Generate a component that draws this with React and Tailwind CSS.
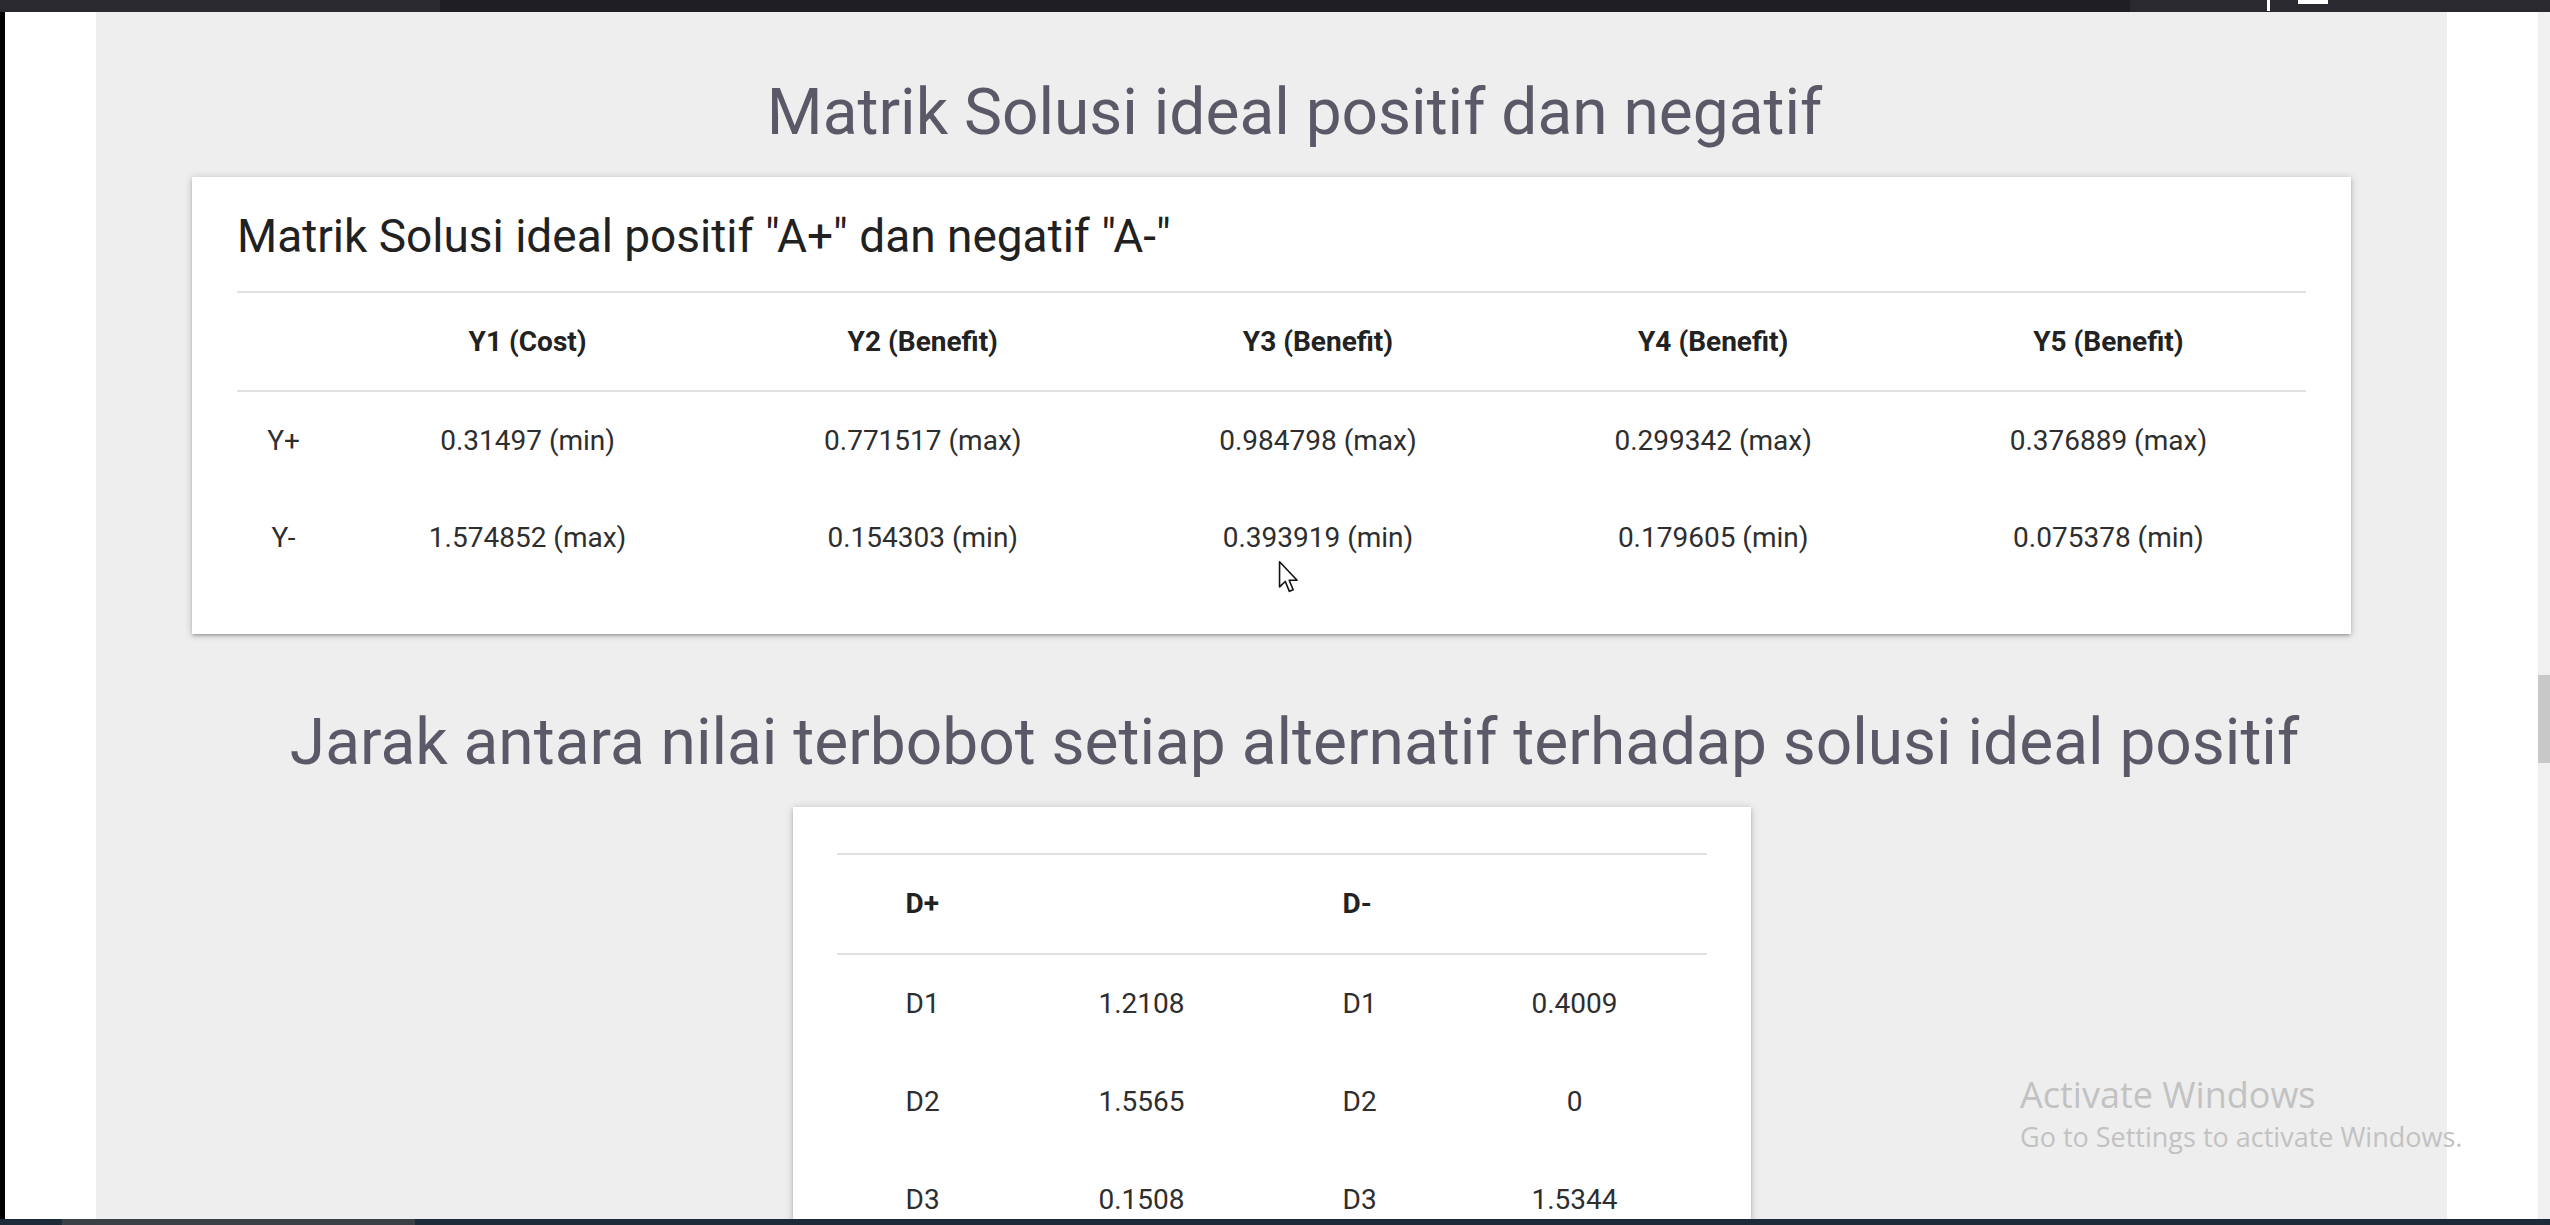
import React from "react";

const idealCols = ["Y1 (Cost)", "Y2 (Benefit)", "Y3 (Benefit)", "Y4 (Benefit)", "Y5 (Benefit)"];

const idealRows = [
  { label: "Y+", values: ["0.31497 (min)", "0.771517 (max)", "0.984798 (max)", "0.299342 (max)", "0.376889 (max)"] },
  { label: "Y-", values: ["1.574852 (max)", "0.154303 (min)", "0.393919 (min)", "0.179605 (min)", "0.075378 (min)"] },
];

const distRows = [
  ["D1", "1.2108", "D1", "0.4009"],
  ["D2", "1.5565", "D2", "0"],
  ["D3", "0.1508", "D3", "1.5344"],
];

const cardShadow =
  "shadow-[0_2px_3px_rgba(0,0,0,0.14),0_3px_2px_-2px_rgba(0,0,0,0.12),0_1px_8px_rgba(0,0,0,0.2)]";

const Rule = () => <div className="h-[2px] bg-[#e0e0e0]" />;

const IdealCard = () => (
  <div className={`mx-[96px] mt-[28px] bg-white px-[45px] pt-[31px] pb-[48px] ${cardShadow}`}>
    <h2 className="text-[46px] leading-[56px] text-[#212121]">
      Matrik Solusi ideal positif "A+" dan negatif "A-"
    </h2>
    <div className="mt-[27px]">
      <Rule />
      <div className="grid grid-cols-[93px_repeat(5,1fr)] h-[97px] items-center text-center text-[28px] font-bold text-[#222]">
        <div />
        {idealCols.map((c) => (
          <div key={c}>{c}</div>
        ))}
      </div>
      <Rule />
      {idealRows.map((row) => (
        <div
          key={row.label}
          className="grid grid-cols-[93px_repeat(5,1fr)] h-[97px] items-center text-center text-[28px] text-[#2e2e2e]"
        >
          <div>{row.label}</div>
          {row.values.map((v, i) => (
            <div key={i}>{v}</div>
          ))}
        </div>
      ))}
    </div>
  </div>
);

const DistanceCard = () => (
  <div className={`mx-auto mt-[28px] w-[958px] bg-white px-[44px] pt-[46px] pb-[40px] ${cardShadow}`}>
    <Rule />
    <div className="grid grid-cols-[173px_264px_169px_264px] h-[98px] items-center text-[28px] font-bold text-[#222]">
      <div className="pl-[69px]">D+</div>
      <div />
      <div className="pl-[69px]">D-</div>
      <div />
    </div>
    <Rule />
    {distRows.map((r) => (
      <div
        key={r[0]}
        className="grid grid-cols-[173px_264px_169px_264px] h-[98px] items-center text-[28px] text-[#2e2e2e]"
      >
        <div className="pl-[69px]">{r[0]}</div>
        <div className="text-center">{r[1]}</div>
        <div className="pl-[69px]">{r[2]}</div>
        <div className="text-center">{r[3]}</div>
      </div>
    ))}
  </div>
);

const Cursor = () => (
  <svg
    className="absolute left-[1277px] top-[560px]"
    width="23"
    height="34"
    viewBox="0 0 12 19"
  >
    <path
      d="M1 1 L1 15 L4.2 12 L6.5 17.5 L8.6 16.6 L6.4 11.3 L10.8 11.3 Z"
      fill="white"
      stroke="#111"
      strokeWidth="0.9"
      strokeLinejoin="round"
    />
  </svg>
);

export default function App() {
  return (
    <div className="relative w-[2550px] h-[1225px] overflow-hidden flex flex-col bg-black font-['Roboto',sans-serif]">
      <div className="relative h-[12px] shrink-0 flex bg-[#2a2930]">
        <div className="w-[440px]" />
        <div className="w-[1690px] bg-[#1f1e25]" />
        <div className="absolute left-[2267px] top-0 h-[11px] w-[3px] bg-white" />
        <div className="absolute left-[2298px] top-0 h-[4px] w-[30px] bg-white" />
      </div>

      <div className="flex flex-1 min-h-0">
        <div className="w-[5px] bg-black" />
        <div className="w-[91px] bg-white" />
        <main className="w-[2351px] bg-[#eeeeee] flex flex-col pt-[65px]">
          <h1 className="pl-[46px] text-center text-[64px] leading-[72px] text-[#5b5867]">
            Matrik Solusi ideal positif dan negatif
          </h1>
          <IdealCard />
          <h1 className="mt-[73px] pl-[46px] text-center text-[64px] leading-[72px] text-[#5b5867]">
            Jarak antara nilai terbobot setiap alternatif terhadap solusi ideal positif
          </h1>
          <DistanceCard />
        </main>
        <div className="w-[91px] bg-white" />
        <div className="w-[12px] bg-[#f0f0f0] flex flex-col">
          <div className="h-[663px]" />
          <div className="h-[88px] bg-[#c8c8c8]" />
        </div>
      </div>

      <div className="h-[6px] shrink-0 flex bg-[#1d2b38]">
        <div className="w-[62px]" />
        <div className="w-[353px] bg-[#3b4047]" />
      </div>

      <Cursor />

      <div className="absolute left-[2020px] top-[1073px] font-['Open_Sans',sans-serif] text-[#c2c2c2]">
        <div className="text-[36px] leading-[44px]">Activate Windows</div>
        <div className="text-[27px] leading-[40px]">Go to Settings to activate Windows.</div>
      </div>
    </div>
  );
}
